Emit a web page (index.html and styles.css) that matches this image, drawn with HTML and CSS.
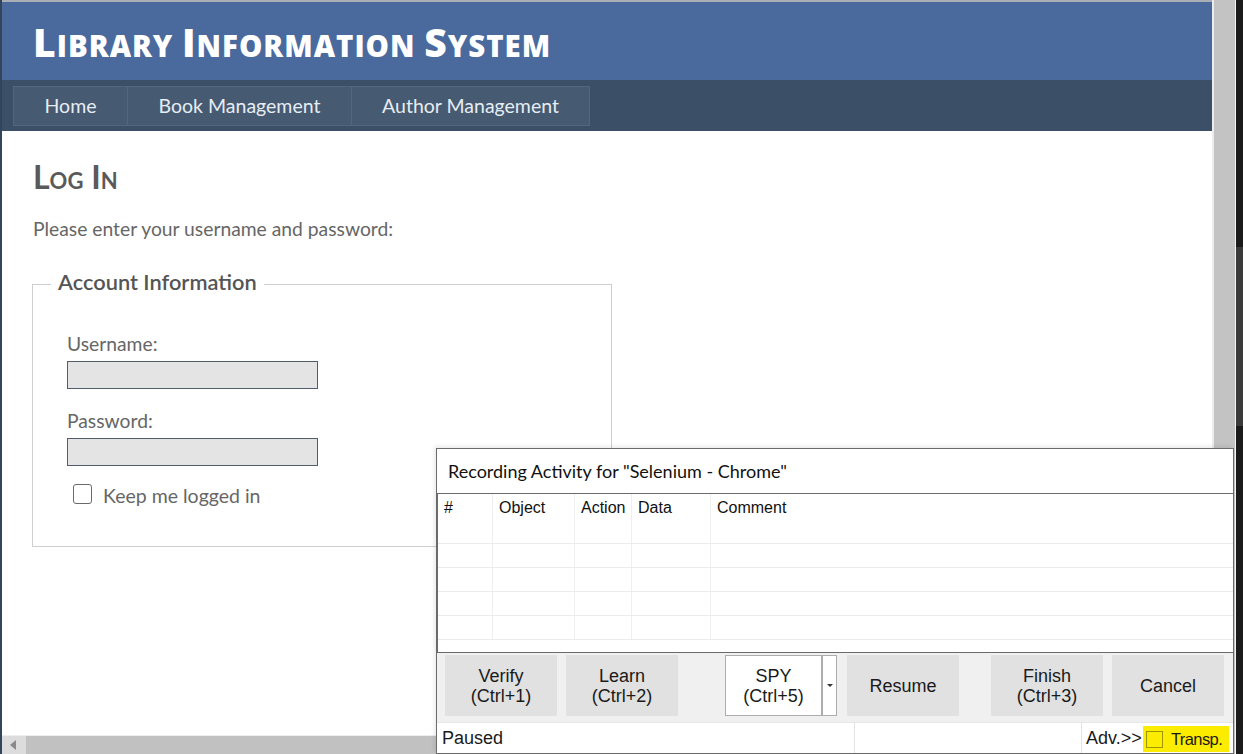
FILE: index.html
```html
<!DOCTYPE html>
<html lang="en">
<head>
<meta charset="utf-8">
<title>Log In - Library Information System</title>
<link rel="stylesheet" href="styles.css">
</head>
<body>
<div class="screen">
  <div class="left-edge"></div>
  <div class="viewport">
    <div class="page">
      <header class="site-header">
        <h1 class="site-title"><span class="initial">L</span>ibrary <span class="initial">I</span>nformation <span class="initial">S</span>ystem</h1>
      </header>
      <nav class="site-nav">
        <ul class="menu">
          <li class="menu-item item-home">Home</li>
          <li class="menu-item item-book">Book Management</li>
          <li class="menu-item item-author">Author Management</li>
        </ul>
      </nav>
      <main class="content">
        <h2 class="page-title">Log In</h2>
        <p class="intro">Please enter your username and password:</p>
        <fieldset class="account">
          <legend class="account-legend">Account Information</legend>
          <div class="field">
            <label class="field-label">Username:</label>
            <div class="textbox"></div>
          </div>
          <div class="field">
            <label class="field-label">Password:</label>
            <div class="textbox"></div>
          </div>
          <div class="remember">
            <span class="checkbox"></span>
            <span class="remember-text">Keep me logged in</span>
          </div>
        </fieldset>
      </main>
    </div>
    <div class="hscroll">
      <div class="hscroll-btn"><span class="arrow-left"></span></div>
      <div class="hscroll-thumb"></div>
    </div>
  </div>
  <div class="vscroll">
    <div class="vscroll-light"></div>
    <div class="vscroll-track"></div>
    <div class="vscroll-line"></div>
  </div>
  <div class="dark-edge">
    <div class="dark-edge-thumb"></div>
  </div>

  <section class="recorder">
    <div class="recorder-title">Recording Activity for "Selenium - Chrome"</div>
    <div class="grid">
      <div class="grid-row grid-head">
        <div class="cell">#</div>
        <div class="cell">Object</div>
        <div class="cell">Action</div>
        <div class="cell">Data</div>
        <div class="cell">Comment</div>
      </div>
      <div class="grid-row first-row">
        <div class="cell"></div><div class="cell"></div><div class="cell"></div><div class="cell"></div><div class="cell"></div>
      </div>
      <div class="grid-row">
        <div class="cell"></div><div class="cell"></div><div class="cell"></div><div class="cell"></div><div class="cell"></div>
      </div>
      <div class="grid-row">
        <div class="cell"></div><div class="cell"></div><div class="cell"></div><div class="cell"></div><div class="cell"></div>
      </div>
      <div class="grid-row">
        <div class="cell"></div><div class="cell"></div><div class="cell"></div><div class="cell"></div><div class="cell"></div>
      </div>
      <div class="grid-row">
        <div class="cell"></div><div class="cell"></div><div class="cell"></div><div class="cell"></div><div class="cell"></div>
      </div>
    </div>
    <div class="toolbar">
      <div class="btn btn-verify">Verify<br>(Ctrl+1)</div>
      <div class="btn btn-learn">Learn<br>(Ctrl+2)</div>
      <div class="split">
        <div class="split-main">SPY<br>(Ctrl+5)</div>
        <div class="split-drop"><span class="drop-arrow"></span></div>
      </div>
      <div class="btn btn-resume">Resume</div>
      <div class="btn btn-finish">Finish<br>(Ctrl+3)</div>
      <div class="btn btn-cancel">Cancel</div>
    </div>
    <div class="statusbar">
      <div class="status-seg seg-paused">Paused</div>
      <div class="status-seg seg-empty"></div>
      <div class="status-seg seg-adv">Adv.&gt;&gt;</div>
      <div class="transp">
        <span class="transp-box"></span>
        <span class="transp-text">Transp.</span>
      </div>
    </div>
  </section>
</div>
</body>
</html>
```

FILE: styles.css
```css
* {
  box-sizing: border-box;
  margin: 0;
  padding: 0;
}

html, body {
  width: 1243px;
  height: 754px;
  overflow: hidden;
}

body {
  background: #1b1b1b;
  font-family: Lato, "Open Sans", sans-serif;
}

.screen {
  position: relative;
  width: 1243px;
  height: 754px;
  display: flex;
}

.left-edge {
  width: 2px;
  background: #33455a;
}

.viewport {
  width: 1210px;
  display: flex;
  flex-direction: column;
  border-top: 2px solid #a9aeb4;
  background: #ffffff;
}

.page {
  flex: 1;
  overflow: hidden;
}

/* header */
.site-header {
  height: 78px;
  background: #4a6a9e;
  padding: 24px 0 0 31px;
}

.site-title {
  color: #ffffff;
  font-family: "Open Sans", sans-serif;
  font-weight: 800;
  text-transform: uppercase;
  font-size: 29.4px;
  line-height: 40px;
  letter-spacing: 1px;
  white-space: nowrap;
}

.initial {
  font-size: 39px;
  line-height: 0;
}

.site-nav {
  height: 51px;
  background: #3b4f66;
  padding: 6px 0 5px 11px;
  display: flex;
}

.menu {
  display: flex;
  list-style: none;
  border: 1px solid #52667c;
  background: #465a71;
}

.menu-item {
  color: #e6edf4;
  font-size: 19.5px;
  line-height: 38px;
  height: 38px;
  text-align: center;
}

.menu-item + .menu-item {
  border-left: 1px solid #52667c;
}

.item-home { width: 113px; }
.item-book { width: 224px; }
.item-author { width: 238px; }

/* content */
.content {
  padding: 0 31px;
}

.page-title {
  margin-top: 28px;
  font-size: 32px;
  line-height: 36px;
  font-weight: 700;
  font-variant: small-caps;
  color: #5a5a5a;
}

.intro {
  margin-top: 22px;
  font-size: 19.3px;
  line-height: 24px;
  color: #666666;
}

.account {
  margin-top: 29px;
  width: 580px;
  height: 277px;
  border: 1px solid #cfcfcf;
  padding: 0 0 0 34px;
  margin-left: -1px;
}

.account-legend {
  margin-left: -16px;
  padding: 0 7px 4px;
  font-size: 21.8px;
  line-height: 24px;
  font-weight: 600;
  color: #555555;
}

.field {
  display: flex;
  flex-direction: column;
}

.field:first-of-type {
  margin-top: 34px;
}

.field + .field {
  margin-top: 20px;
}

.field-label {
  font-size: 19.3px;
  line-height: 24px;
  color: #666666;
  margin-bottom: 5px;
}

.textbox {
  width: 251px;
  height: 28px;
  background: #e4e4e4;
  border: 1px solid #4f5d6c;
}

.remember {
  margin-top: 13px;
  margin-left: 6px;
  display: flex;
  align-items: center;
  gap: 11px;
}

.checkbox {
  width: 19px;
  height: 20px;
  border: 1.5px solid #6a6a6a;
  border-radius: 3px;
  background: #ffffff;
}

.remember-text {
  font-size: 19.5px;
  line-height: 24px;
  color: #666666;
  margin-top: 5px;
}

/* scrollbars */
.hscroll {
  height: 19px;
  display: flex;
  border-top: 1px solid #eeeeee;
  background: #c1c1c1;
}

.hscroll-btn {
  width: 24px;
  background: #dcdcdc;
  display: flex;
  align-items: center;
  padding-left: 8px;
}

.arrow-left {
  width: 0;
  height: 0;
  border-top: 5px solid transparent;
  border-bottom: 5px solid transparent;
  border-right: 6px solid #8a8a8a;
}

.hscroll-thumb {
  flex: 1;
  background: #c1c1c1;
}

.vscroll {
  width: 24px;
  display: flex;
}

.vscroll-light {
  width: 2px;
  background: #ececec;
}

.vscroll-track {
  flex: 1;
  background: #c3c3c3;
}

.vscroll-line {
  width: 1px;
  background: #f4f4f4;
}

.dark-edge {
  width: 7px;
  background: #1b1b1b;
  padding-top: 247px;
}

.dark-edge-thumb {
  height: 179px;
  background: #3a3a3a;
}

/* recorder dialog */
.recorder {
  position: absolute;
  left: 436px;
  top: 448px;
  width: 798px;
  height: 306px;
  border: 1px solid #6b6b6b;
  background: #ffffff;
  display: flex;
  flex-direction: column;
  box-shadow: -2px -2px 4px rgba(0, 0, 0, 0.08);
}

.recorder-title {
  height: 45px;
  flex-shrink: 0;
  padding: 10px 0 0 11px;
  font-family: Lato, "Open Sans", sans-serif;
  font-size: 18px;
  line-height: 24px;
  color: #111111;
  border-bottom: 1px solid #6b6b6b;
}

.grid {
  height: 158px;
  flex-shrink: 0;
  border-left: 1px solid #6b6b6b;
  overflow: hidden;
  font-family: "Liberation Sans", Arial, sans-serif;
}

.grid-row {
  display: grid;
  grid-template-columns: 55px 82px 57px 79px 1fr;
  height: 24px;
  border-bottom: 1px solid #ececec;
}

.grid-head {
  height: 27px;
  border-bottom: none;
}

.first-row {
  height: 23px;
}

.cell {
  border-right: 1px solid #efefef;
  padding: 1px 0 0 6px;
  font-size: 16px;
  line-height: 26px;
  color: #111111;
}

.cell:last-child {
  border-right: none;
}

.toolbar {
  height: 71px;
  flex-shrink: 0;
  background: #f0f0f0;
  border-top: 1px solid #6b6b6b;
  border-bottom: 1px solid #e6e6e6;
  display: flex;
  padding: 2px 0 0 8px;
  font-family: "Liberation Sans", Arial, sans-serif;
}

.btn {
  width: 112px;
  height: 61px;
  background: #e1e1e1;
  color: #1a1a1a;
  font-size: 18px;
  line-height: 20px;
  display: flex;
  align-items: center;
  justify-content: center;
  text-align: center;
}

.btn-learn { margin-left: 9px; }

.split {
  margin-left: 47px;
  display: flex;
  height: 61px;
  border: 1px solid #adadad;
  background: #ffffff;
}

.split-main {
  width: 97px;
  border-right: 2px solid #adadad;
  font-size: 18px;
  line-height: 20px;
  color: #1a1a1a;
  display: flex;
  align-items: center;
  justify-content: center;
  text-align: center;
}

.split-drop {
  width: 13px;
  display: flex;
  align-items: center;
  justify-content: center;
}

.drop-arrow {
  width: 0;
  height: 0;
  border-left: 3px solid transparent;
  border-right: 3px solid transparent;
  border-top: 3px solid #333333;
}

.btn-resume { margin-left: 10px; }
.btn-finish { margin-left: 32px; }
.btn-cancel { margin-left: 9px; }

.statusbar {
  flex: 1;
  display: flex;
  background: #ffffff;
  font-family: "Liberation Sans", Arial, sans-serif;
  color: #1a1a1a;
}

.status-seg {
  font-size: 18px;
  line-height: 30px;
  padding-left: 5px;
  border-right: 1px solid #e3e3e3;
}

.seg-paused { width: 418px; }
.seg-empty { width: 227px; }
.seg-adv {
  width: 61px;
  padding-left: 4px;
  border-right: none;
}

.transp {
  margin-top: 3px;
  width: 86px;
  height: 26px;
  background: #fcec00;
  display: flex;
  align-items: center;
  padding-left: 3px;
  gap: 8px;
}

.transp-box {
  width: 17px;
  height: 17px;
  border: 1px solid #9e9600;
}

.transp-text {
  font-size: 16.5px;
  letter-spacing: -0.6px;
  line-height: 20px;
}
```
